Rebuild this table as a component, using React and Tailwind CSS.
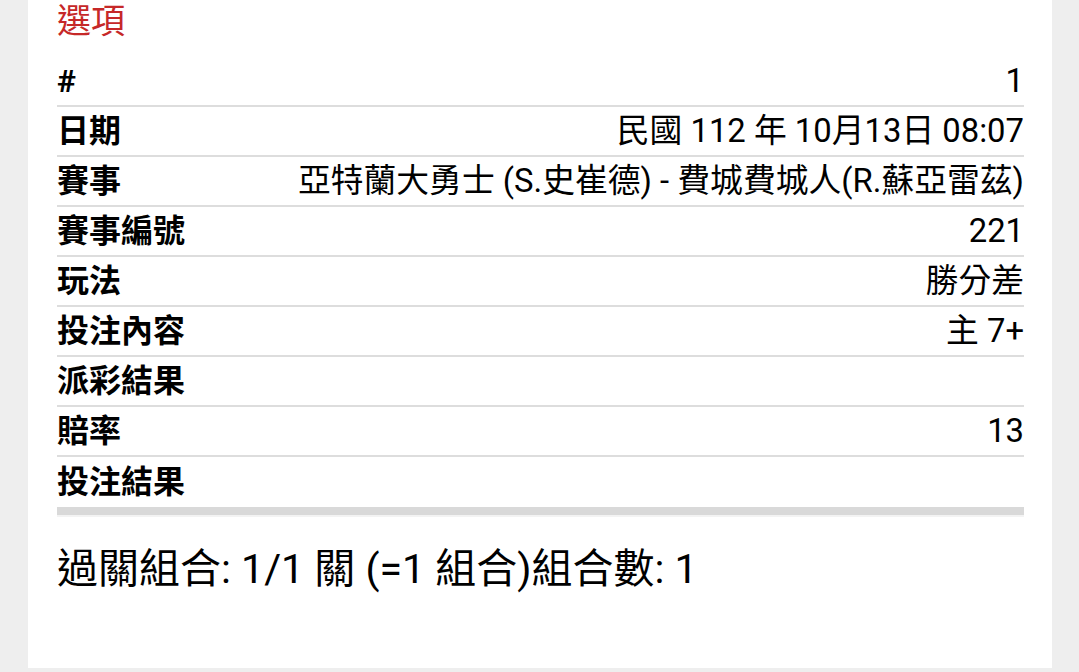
import React from 'react';

const rows = [
  { label: '#', value: '1' },
  { label: '日期', value: '民國 112 年 10月13日 08:07' },
  { label: '賽事', value: '亞特蘭大勇士 (S.史崔德) - 費城費城人(R.蘇亞雷茲)' },
  { label: '賽事編號', value: '221' },
  { label: '玩法', value: '勝分差' },
  { label: '投注內容', value: '主 7+' },
  { label: '派彩結果', value: '' },
  { label: '賠率', value: '13' },
  { label: '投注結果', value: '' },
];

export default function App() {
  return (
    <div
      className="h-[672px] overflow-hidden bg-[#eeeeee] pl-[28px] pr-[27px] text-black"
      style={{ fontFamily: 'Roboto, "Noto Sans CJK TC", sans-serif' }}
    >
      <div className="flex h-[668px] flex-col bg-white pl-[29px] pr-[28px]">
        <div className="flex h-[57px] items-center pb-[16px] text-[34px] leading-none text-[#c62828]">
          選項
        </div>
        <div className="flex flex-col">
          {rows.map((row, i) => (
            <div
              key={row.label}
              className={
                i === rows.length - 1
                  ? 'flex h-[50px] items-center justify-between'
                  : 'flex h-[50px] items-center justify-between border-b-2 border-[#dddddd]'
              }
            >
              <span className="text-[32px] font-bold leading-none">{row.label}</span>
              <span className="text-[32.8px] leading-none">{row.value}</span>
            </div>
          ))}
        </div>
        <div className="h-[8px] bg-[#d9d9d9]" />
        <div className="h-[2px] bg-[#f3f3f3]" />
        <div className="pt-[32px] text-[41px] leading-none">
          過關組合: 1/1 關 (=1 組合)組合數: 1
        </div>
      </div>
    </div>
  );
}
